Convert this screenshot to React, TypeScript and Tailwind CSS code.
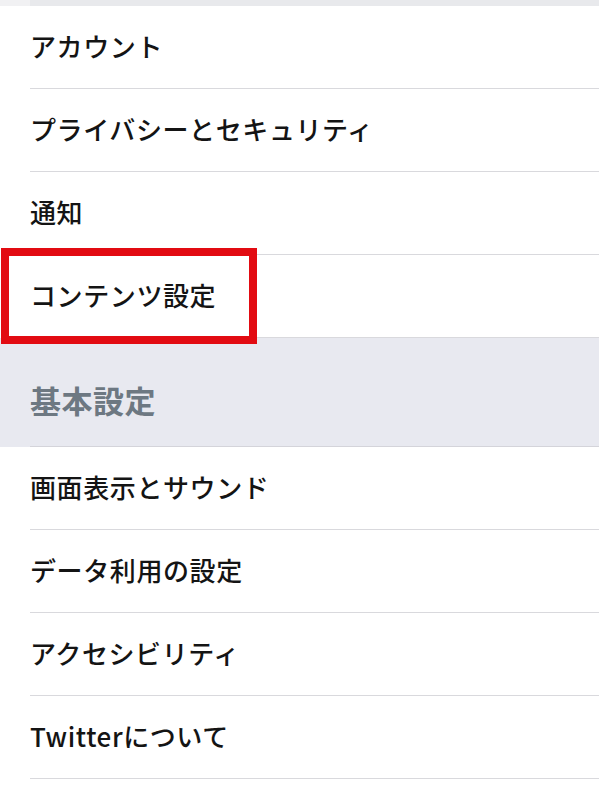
import React from "react";

const font = { fontFamily: '"Noto Sans CJK JP", "Noto Sans", sans-serif' };

function Row({ label }: { label: string }) {
  return (
    <div className="pl-[30px] bg-white">
      <div className="h-[83px] pb-[4px] flex items-center border-b border-[#d9d9dd] text-[26px] font-medium text-[#141414] tracking-[0.6px]">
        {label}
      </div>
    </div>
  );
}

export default function App() {
  const top = ["アカウント", "プライバシーとセキュリティ", "通知", "コンテンツ設定"];
  const bottom = ["画面表示とサウンド", "データ利用の設定", "アクセシビリティ", "Twitterについて"];

  return (
    <div className="relative w-[599px] h-[791px] bg-white overflow-hidden" style={font}>
      <div className="h-[6px] flex">
        <div className="w-[30px] bg-[#f1f1f3]" />
        <div className="flex-1 bg-[#e8e9ec]" />
      </div>
      {top.map((t) => (
        <Row key={t} label={t} />
      ))}
      <div className="bg-[#e8e9f0] pl-[30px]">
        <div className="h-[109px] pt-[16px] flex items-center border-b border-[#d4d4da] text-[31px] font-bold text-[#6d7882] tracking-[0.5px]">
          基本設定
        </div>
      </div>
      {bottom.map((t) => (
        <Row key={t} label={t} />
      ))}

      <div className="absolute left-[1px] top-[248px] w-[256px] h-[96px] border-[8px] border-[#e20b12]" />
    </div>
  );
}
